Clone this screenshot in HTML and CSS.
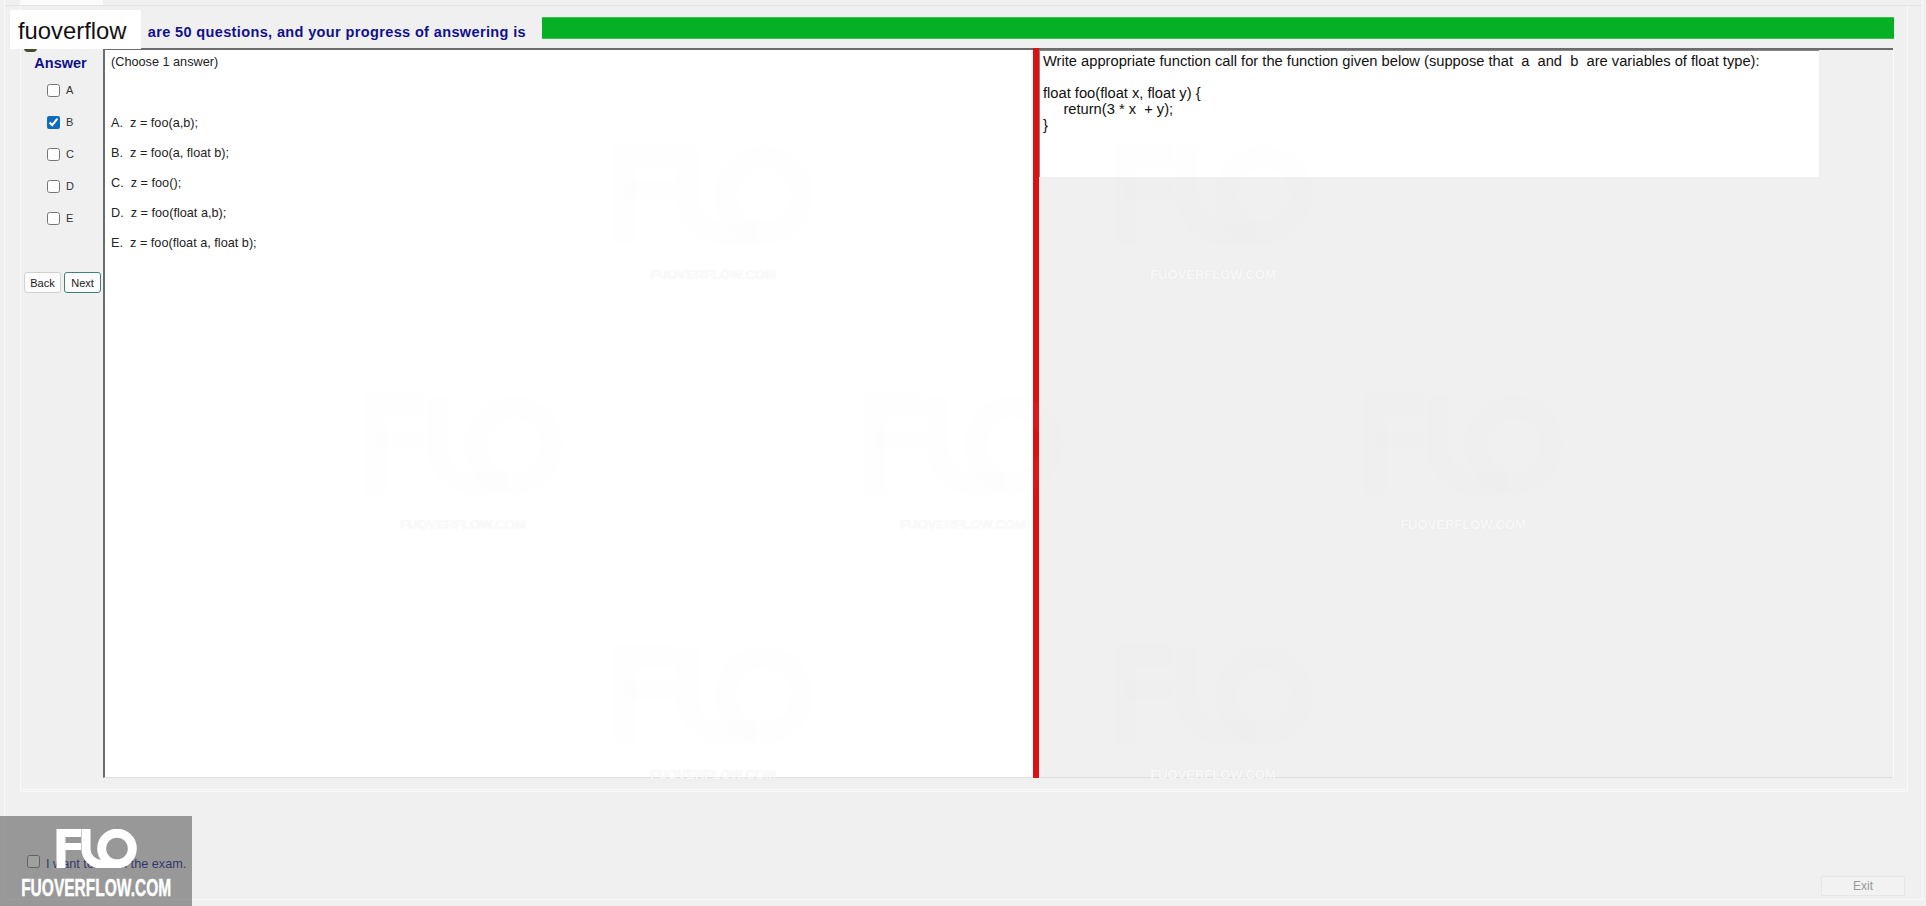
FILE: index.html
```html
<!DOCTYPE html>
<html lang="en">
<head>
  <meta charset="UTF-8" />
  <title>Exam</title>
  <link rel="stylesheet" href="styles.css">
</head>
<body>
  <div class="window">
    <div class="tabs"><div class="tab"></div></div>
    <div class="tab-page">
      <div class="progress">
        <span class="progress-label">are 50 questions, and your progress of answering is</span>
        <div class="progress-bar"></div>
      </div>
      <div class="main">
        <div class="answers">
          <div class="answers-title">Answer</div>
          <label class="answer-row"><input type="checkbox"> A</label>
          <label class="answer-row"><input type="checkbox" checked> B</label>
          <label class="answer-row"><input type="checkbox"> C</label>
          <label class="answer-row"><input type="checkbox"> D</label>
          <label class="answer-row"><input type="checkbox"> E</label>
          <div class="nav-btns">
            <button class="nav-btn">Back</button>
            <button class="nav-btn nav-btn-focus">Next</button>
          </div>
        </div>
        <div class="question">
          <div class="choose">(Choose 1 answer)</div>
          <div class="option">A.  z = foo(a,b);</div>
          <div class="option">B.  z = foo(a, float b);</div>
          <div class="option">C.  z = foo();</div>
          <div class="option">D.  z = foo(float a,b);</div>
          <div class="option">E.  z = foo(float a, float b);</div>
        </div>
        <div class="splitter"></div>
        <div class="stem-col">
          <div class="stem">Write appropriate function call for the function given below (suppose that  a  and  b  are variables of float type):

float foo(float x, float y) {
     return(3 * x  + y);
}</div>
        </div>
      </div>
    </div>
    <div class="footer">
      <label class="finish"><input type="checkbox"> I want to finish the exam.</label>
      <button class="exit-btn" disabled>Exit</button>
    </div>
  </div>

  <div class="watermarks">
    <div class="mark-row">
      <div class="mark"><svg class="mark-logo" viewBox="0 0 81 39"><use href="#fuo"/></svg><span>FUOVERFLOW.COM</span></div>
      <div class="mark"><svg class="mark-logo" viewBox="0 0 81 39"><use href="#fuo"/></svg><span>FUOVERFLOW.COM</span></div>
    </div>
    <div class="mark-row">
      <div class="mark"><svg class="mark-logo" viewBox="0 0 81 39"><use href="#fuo"/></svg><span>FUOVERFLOW.COM</span></div>
      <div class="mark"><svg class="mark-logo" viewBox="0 0 81 39"><use href="#fuo"/></svg><span>FUOVERFLOW.COM</span></div>
      <div class="mark"><svg class="mark-logo" viewBox="0 0 81 39"><use href="#fuo"/></svg><span>FUOVERFLOW.COM</span></div>
    </div>
    <div class="mark-row">
      <div class="mark"><svg class="mark-logo" viewBox="0 0 81 39"><use href="#fuo"/></svg><span>FUOVERFLOW.COM</span></div>
      <div class="mark"><svg class="mark-logo" viewBox="0 0 81 39"><use href="#fuo"/></svg><span>FUOVERFLOW.COM</span></div>
    </div>
  </div>

  <div class="tag-peek"></div>
  <div class="brand-tag">fuoverflow</div>

  <div class="brand-corner">
    <svg class="corner-logo" viewBox="0 0 81 39">
      <g id="fuo" fill="none" stroke="currentColor" stroke-width="9">
        <path d="M25 3.5H5V39"/>
        <path d="M5 17.5H25" stroke-width="7"/>
        <path d="M30 0V20a15 15 0 0 0 15 15H58"/>
        <circle cx="61" cy="19.5" r="15.3"/>
      </g>
    </svg>
    <div class="corner-name">FUOVERFLOW.COM</div>
  </div>
</body>
</html>
```

FILE: styles.css
```css
html, body {
  margin: 0;
  padding: 0;
  height: 100%;
  overflow: hidden;
  background: #f0f0f0;
  font-family: "Liberation Sans", Arial, sans-serif;
}
body {
  position: relative;
}
.window {
  height: 900px;
  margin: 0 3px 0 4px;
  border: 1px solid #f9f9f9;
  border-top: none;
  box-sizing: border-box;
  display: flex;
  flex-direction: column;
}
.tabs {
  height: 6px;
  padding-left: 15px;
  border-bottom: 1px solid #e4e4e4;
  box-sizing: border-box;
}
.tab {
  width: 83px;
  height: 5px;
  background: #fbfbfb;
}
.tab-page {
  height: 786px;
  margin: 0 14px 0 15px;
  border: 1px solid #f9f9f9;
  border-top: none;
  border-bottom: 3px double #f9f9f9;
  box-sizing: border-box;
  flex: none;
}
.progress {
  height: 42px;
  display: flex;
  align-items: center;
  padding: 2px 13px 0 0;
  box-sizing: border-box;
}
.progress-label {
  width: 505px;
  margin-top: 7px;
  text-align: right;
  white-space: nowrap;
  font-size: 14.5px;
  font-weight: bold;
  letter-spacing: 0.37px;
  color: #10108c;
}
.progress-bar {
  flex: 1;
  height: 22px;
  margin-left: 16px;
  background: #06b025;
  border-top: 1px solid #35bf50;
  border-bottom: 1px solid #35bf50;
  box-sizing: border-box;
}
.main {
  height: 730px;
  margin: 0 13px 0 1px;
  display: flex;
  border-right: 1px solid #fafafa;
  box-sizing: border-box;
}
.answers {
  width: 81px;
  flex: none;
  padding-top: 7px;
  box-sizing: border-box;
}
.answers-title {
  height: 16px;
  line-height: 16px;
  padding-right: 4px;
  text-align: center;
  font-size: 14.5px;
  font-weight: bold;
  color: #10108c;
  margin-bottom: 3px;
}
.answer-row {
  height: 32px;
  padding-left: 25px;
  display: flex;
  align-items: center;
  gap: 6px;
  font-size: 11px;
  color: #333;
}
.answer-row input, .finish input {
  width: 13px;
  height: 13px;
  margin: 0;
  accent-color: #0f6cbd;
}
.nav-btns {
  display: flex;
  gap: 3px;
  margin-top: 38px;
  padding: 0 2px;
}
.nav-btn {
  width: 37px;
  height: 21px;
  padding: 0;
  font-family: inherit;
  font-size: 11px;
  color: #222;
  background: #fcfcfc;
  border: 1px solid #d0d0d0;
  border-radius: 3px;
}
.nav-btn-focus {
  border-color: #3f7f80;
}
.question {
  width: 930px;
  flex: none;
  background: #fff;
  border-top: 2px solid #6c6c6c;
  border-left: 2px solid #6c6c6c;
  border-bottom: 1px solid #dedede;
  padding: 5px 0 0 6px;
  box-sizing: border-box;
  font-size: 12.7px;
  color: #222;
}
.choose {
  height: 14px;
  line-height: 14px;
  margin-bottom: 38.5px;
}
.option {
  height: 30px;
  line-height: 30px;
  white-space: pre;
}
.splitter {
  width: 6px;
  flex: none;
  background: #dd1111;
}
.stem-col {
  flex: 1;
  border-top: 2px solid #6c6c6c;
  border-bottom: 1px solid #dedede;
}
.stem {
  width: 780px;
  height: 127px;
  background: #fff;
  border-top: 1px solid #888;
  border-left: 1px solid #888;
  padding: 2px 0 0 3px;
  box-sizing: border-box;
  font-size: 14.7px;
  line-height: 16px;
  color: #111;
  white-space: pre;
}
.footer {
  flex: 1;
  display: flex;
  justify-content: space-between;
  align-items: flex-end;
  padding: 0 17px 3px 22px;
}
.finish {
  display: flex;
  align-items: center;
  gap: 6px;
  margin-bottom: 24px;
  font-size: 12.7px;
  color: #10108c;
}
.finish input {
  margin-bottom: 4px;
}
.exit-btn {
  width: 84px;
  height: 20px;
  padding: 0;
  font-family: inherit;
  font-size: 12px;
  color: #9a9a9a;
  background: #f2f2f2;
  border: 1px solid #e6e6e6;
}
.watermarks {
  position: absolute;
  top: 140px;
  left: 0;
  width: 100%;
  pointer-events: none;
}
.mark-row {
  height: 250px;
  display: flex;
  justify-content: center;
  gap: 300px;
}
.mark {
  width: 200px;
  height: 142px;
  display: flex;
  flex-direction: column;
  align-items: center;
  justify-content: space-between;
  font-size: 13px;
  font-weight: bold;
  color: rgba(255,255,255,0.75);
  text-shadow: 0 0 1px rgba(200,200,200,0.35);
}
.mark-logo {
  width: 200px;
  height: 110px;
  color: rgba(225,225,225,0.03);
}
.tag-peek {
  position: absolute;
  top: 48px;
  left: 24px;
  width: 13px;
  height: 4px;
  border-radius: 0 0 7px 7px;
  background: #4a4a30;
}
.brand-tag {
  position: absolute;
  top: 10px;
  left: 10px;
  width: 131px;
  height: 39px;
  line-height: 42px;
  padding-left: 8px;
  box-sizing: border-box;
  background: #fff;
  font-size: 23.8px;
  color: #111;
}
.brand-corner {
  position: absolute;
  left: 0;
  bottom: 0;
  width: 192px;
  height: 90px;
  background: rgba(80,80,80,0.55);
  display: flex;
  flex-direction: column;
  align-items: center;
}
.corner-logo {
  width: 81px;
  height: 39px;
  margin-top: 13px;
  color: #fff;
}
.corner-name {
  margin-top: 10px;
  font-size: 23px;
  line-height: 20px;
  font-weight: bold;
  color: #fff;
  -webkit-text-stroke: 0.4px #fff;
  transform: scaleX(0.675);
  white-space: nowrap;
}
```
